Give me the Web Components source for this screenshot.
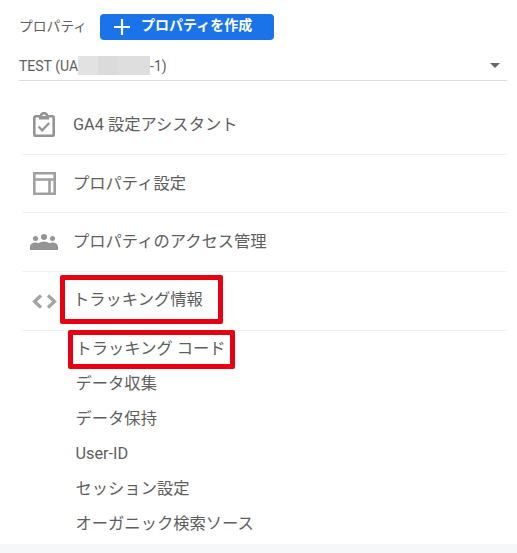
<!DOCTYPE html>
<html lang="ja">
<head>
<meta charset="utf-8">
<title>プロパティ</title>
<style>
  html, body { margin: 0; height: 553px; overflow: hidden; background: #fff; }
  body { font-family: Roboto, "Noto Sans CJK JP", sans-serif; color: #5e5e5e; }
</style>
</head>
<body>
<property-panel>
  <property-head></property-head>
  <nav-row label="GA4 設定アシスタント" icon="assistant" height="74" top="13" nudge="2"></nav-row>
  <nav-row label="プロパティ設定" icon="layout" height="58"></nav-row>
  <nav-row label="プロパティのアクセス管理" icon="people" height="59"></nav-row>
  <nav-row label="トラッキング情報" icon="code" height="59" lift="2"></nav-row>
  <sub-item>トラッキング コード</sub-item>
  <sub-item>データ収集</sub-item>
  <sub-item>データ保持</sub-item>
  <sub-item>User-ID</sub-item>
  <sub-item>セッション設定</sub-item>
  <sub-item>オーガニック検索ソース</sub-item>
  <red-mark style="left:60px;top:275px;width:163px;height:49px"></red-mark>
  <red-mark style="left:68px;top:330px;width:167px;height:39px"></red-mark>
</property-panel>

<script>
const icons = {
  assistant: `<svg width="22" height="25" viewBox="0 0 22 25"><path d="M2.800 4.300h5a3 3 0 0 1 6.400 0h5a1.500 1.500 0 0 1 1.500 1.500v16.600a1.500 1.500 0 0 1-1.500 1.500H2.800a1.500 1.500 0 0 1-1.500-1.500V5.800a1.500 1.500 0 0 1 1.500-1.500z" fill="none" stroke="#949494" stroke-width="2.600"/><path d="M5.500 14.500l3.700 3.800 7-7.300" fill="none" stroke="#949494" stroke-width="2.200"/><rect x="6" y="4" width="10" height="3.500" fill="#949494"/></svg>`,
  layout: `<svg width="23" height="23" viewBox="0 0 23 23"><path d="M1.300 1.300h20.400v20.400h-20.400zM1.300 7.500h20.400M16.500 7.500v14.200" fill="none" stroke="#a0a0a0" stroke-width="2.600"/></svg>`,
  people: `<svg width="28" height="16" viewBox="0 0 28 16"><g fill="#949494"><circle cx="5.500" cy="4.500" r="2.500"/><circle cx="14" cy="3" r="3"/><circle cx="22.500" cy="4.500" r="2.500"/><path d="M0 16v-3c0-3 2.500-4.500 5.500-4.500 1.300 0 2.400.3 3.300.8C10 8.200 12 7.500 14 7.500s4 .7 5.200 1.800c.9-.5 2-.8 3.300-.8 3 0 5.500 1.500 5.500 4.500v3z"/></g></svg>`,
  code: `<svg width="25" height="15" viewBox="0 0 25 15"><path d="M9 1.500L2.500 7.500 9 13.500M16 1.500l6.500 6-6.500 6" fill="none" stroke="#a3a3a3" stroke-width="3.200"/></svg>`
};

customElements.define("property-panel", class extends HTMLElement {
  constructor() {
    super();
    this.attachShadow({ mode: "open" });
    this.shadowRoot.innerHTML = `
      <style>
        :host { display: flex; flex-direction: column; position: relative; height: 553px; }
        .foot { flex: 1; background: #f6f7f9; margin-top: 3px; }
      </style>
      <slot></slot>
      <div class="foot"></div>
    `;
  }
});

customElements.define("property-head", class extends HTMLElement {
  constructor() {
    super();
    this.attachShadow({ mode: "open" });
    this.shadowRoot.innerHTML = `
      <style>
        :host { display: block; padding: 14px 10px 0 19px; }
        .top { display: flex; align-items: center; height: 26px; font-size: 13.800px; line-height: 20px; }
        .top > span { width: 81px; padding-bottom: 2px; white-space: nowrap; }
        button {
          display: flex; align-items: center; gap: 11px; width: 174px; height: 26px; padding: 0 0 0 14px;
          border: 0; border-radius: 4px; background: #1a73e8; color: #fff;
          font: 700 14px/20px Roboto, "Noto Sans CJK JP", sans-serif;
        }
        button span { padding-bottom: 5px; }
        .select {
          display: flex; align-items: center; height: 40px; margin-top: 1px; padding-top: 10px; box-sizing: border-box;
          border-bottom: 1px solid #ddd; font-size: 14px; line-height: 20px;
        }
        .blur { width: 72px; height: 19px; margin-top: -1px;
          background: linear-gradient(90deg, #e2e2e2 0 28%, #dbdbdb 28% 56%, #dedede 56%); }
        .caret { margin-left: auto; margin-right: 7px; width: 0; height: 0;
          border: 5px solid transparent; border-top-color: #666; border-bottom: 0; }
      </style>
      <div class="top">
        <span>プロパティ</span>
        <button>
          <svg width="16" height="16" viewBox="0 0 16 16"><path d="M8 0v16M0 8h16" stroke="#fff" stroke-width="2.200"/></svg>
          <span>プロパティを作成</span>
        </button>
      </div>
      <div class="select">
        <span>TEST (UA</span><span class="blur"></span><span>-1)</span>
        <span class="caret"></span>
      </div>
    `;
  }
});

customElements.define("nav-row", class extends HTMLElement {
  constructor() {
    super();
    this.attachShadow({ mode: "open" });
    const label = this.getAttribute("label");
    const icon = icons[this.getAttribute("icon")];
    this.shadowRoot.innerHTML = `
      <style>
        :host { display: block; margin: 0 10px 0 22px; border-bottom: 1px solid #f0f0f0; box-sizing: border-box; height: ${this.getAttribute("height")}px; padding-top: ${this.getAttribute("top") || 0}px; }
        .row { display: flex; align-items: center; height: 100%; }
        .icon { width: 44px; margin-right: 7px; display: flex; justify-content: center; }
        .label { font-size: 16.300px; line-height: 22px; white-space: nowrap; padding-top: ${this.getAttribute("nudge") || 0}px; padding-bottom: ${this.getAttribute("lift") || 0}px; }
      </style>
      <div class="row">
        <div class="icon">${icon}</div>
        <span class="label">${label}</span>
      </div>
    `;
  }
});

customElements.define("sub-item", class extends HTMLElement {
  constructor() {
    super();
    this.attachShadow({ mode: "open" });
    this.shadowRoot.innerHTML = `
      <style>
        :host { display: flex; align-items: center; height: 35px; padding-left: 75.500px; font-size: 16.300px; line-height: 22px; white-space: nowrap; }
      </style>
      <slot></slot>
    `;
  }
});

customElements.define("red-mark", class extends HTMLElement {
  constructor() {
    super();
    this.attachShadow({ mode: "open" });
    this.shadowRoot.innerHTML = `
      <style>
        :host { display: block; position: absolute; box-sizing: border-box; border: 5px solid #e60012; border-radius: 2px; pointer-events: none; }
      </style>
    `;
  }
});
</script>
</body>
</html>
